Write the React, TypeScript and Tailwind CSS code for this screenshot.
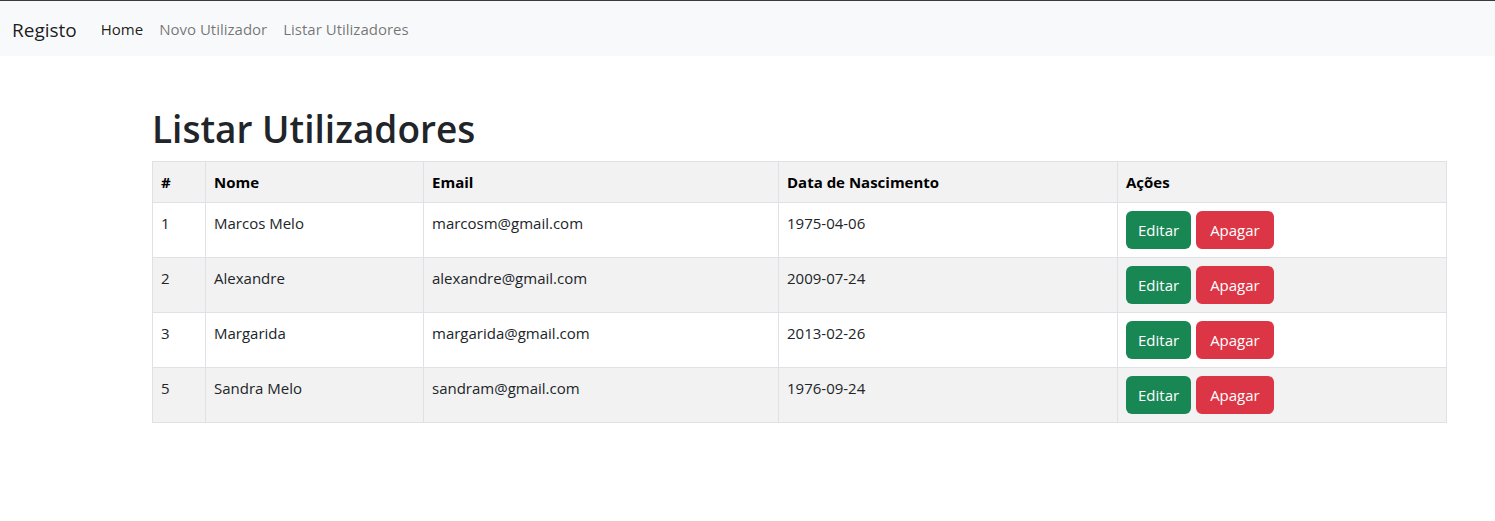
const users = [
  { id: 1, nome: 'Marcos Melo', email: 'marcosm@gmail.com', nascimento: '1975-04-06' },
  { id: 2, nome: 'Alexandre', email: 'alexandre@gmail.com', nascimento: '2009-07-24' },
  { id: 3, nome: 'Margarida', email: 'margarida@gmail.com', nascimento: '2013-02-26' },
  { id: 5, nome: 'Sandra Melo', email: 'sandram@gmail.com', nascimento: '1976-09-24' },
];

const App = () => {
  return (
    <div className="min-h-screen bg-white text-[#212529] font-['Open_Sans',sans-serif] border-t border-[#3a3a3a]">
      {/* Navbar */}
      <nav className="flex items-center h-[55px] bg-[#f8f9fa] px-3 pt-[2px]">
        <span className="text-[19px] text-black/90 mr-4 leading-[30px]">Registo</span>
        <div className="flex items-center">
          <a className="px-2 text-[15px] text-black/90">Home</a>
          <a className="px-2 text-[15px] text-black/55">Novo Utilizador</a>
          <a className="px-2 text-[15px] text-black/55">Listar Utilizadores</a>
        </div>
      </nav>

      {/* Page Content */}
      <main className="pl-[152px] pr-[48px]">
        <h1 className="mt-[49px] mb-2 text-[37px] leading-[48px] font-semibold">Listar Utilizadores</h1>
        <table className="w-full border-collapse border border-[#dee2e6] text-[15px]">
          <thead>
            <tr className="bg-[#f2f2f2] h-[41px] text-black">
              <th className="w-[53px] border border-[#dee2e6] px-2 text-left font-bold">#</th>
              <th className="w-[218px] border border-[#dee2e6] px-2 text-left font-bold">Nome</th>
              <th className="w-[355px] border border-[#dee2e6] px-2 text-left font-bold">Email</th>
              <th className="w-[339px] border border-[#dee2e6] px-2 text-left font-bold">Data de Nascimento</th>
              <th className="border border-[#dee2e6] px-2 text-left font-bold">Ações</th>
            </tr>
          </thead>
          <tbody>
            {users.map((u, i) => (
              <tr key={u.id} className={i % 2 === 1 ? 'bg-[#f2f2f2] h-[55px]' : 'bg-white h-[55px]'}>
                <td className="border border-[#dee2e6] px-2 pt-2 align-top leading-6">{u.id}</td>
                <td className="border border-[#dee2e6] px-2 pt-2 align-top leading-6">{u.nome}</td>
                <td className="border border-[#dee2e6] px-2 pt-2 align-top leading-6">{u.email}</td>
                <td className="border border-[#dee2e6] px-2 pt-2 align-top leading-6">{u.nascimento}</td>
                <td className="border border-[#dee2e6] px-2 py-2 align-top">
                  <div className="flex gap-[5px]">
                    <button className="h-[38px] px-3 rounded-md bg-[#198754] text-white leading-6">Editar</button>
                    <button className="h-[38px] px-[14px] rounded-md bg-[#dc3545] text-white leading-6">Apagar</button>
                  </div>
                </td>
              </tr>
            ))}
          </tbody>
        </table>
      </main>
    </div>
  );
};

export default App;
